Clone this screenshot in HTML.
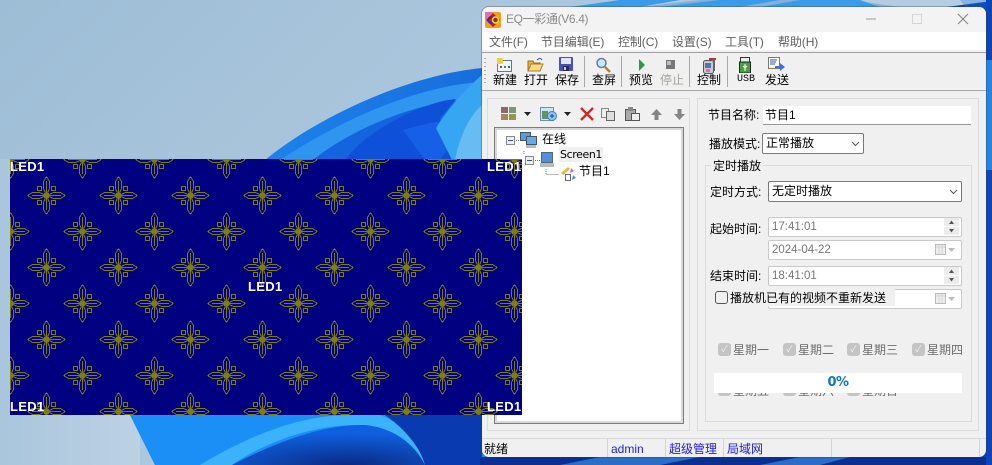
<!DOCTYPE html>
<html><head><meta charset="utf-8">
<style>
html,body{margin:0;padding:0;width:992px;height:465px;overflow:hidden;background:#a9c5dc}
*{box-sizing:border-box}
body{position:relative;font:12px/16px "Liberation Sans","Noto Sans CJK SC",sans-serif;color:#000}
.a{position:absolute;white-space:nowrap}
.m{color:#5f5f5f;top:34px;font-size:12px;letter-spacing:-.1px}
.t{top:72px;font-size:12px;color:#000}
.sep{position:absolute;top:56px;width:1px;height:31px;background:#a8a8a8}
.in{position:absolute;background:#fff;border:1px solid #c9c9c9;border-radius:2px;color:#777;padding-left:3px;line-height:18px;height:20px;font-size:11.5px}
.cb{position:absolute;width:13px;height:13px;background:#c4c4c4;border-radius:3px;color:#f0f0f0;font-size:9px;line-height:13px;text-align:center}
.d{color:#6d6d6d;font-size:12px}
.led{color:#fff;font:bold 13px/16px "Liberation Sans",sans-serif;letter-spacing:.3px}
svg{position:absolute;display:block}
</style></head><body>
<svg style="left:0;top:0" width="992" height="465" viewBox="0 0 992 465">
<defs>
<linearGradient id="sky" x1="0" y1="0" x2="1" y2="0.5"><stop offset="0" stop-color="#9dbdd6"/><stop offset="1" stop-color="#bcd2e5"/></linearGradient>
<linearGradient id="sky2" x1="0" y1="0" x2="1" y2="0"><stop offset="0" stop-color="#a9c6dc"/><stop offset="1" stop-color="#bdd1e4"/></linearGradient>
<linearGradient id="dk" x1="0" y1="0" x2="1" y2="0"><stop offset="0" stop-color="#1f8ff5"/><stop offset="1" stop-color="#0a3cb8"/></linearGradient>
<radialGradient id="dark" cx="0.6" cy="1" r="0.8"><stop offset="0" stop-color="#0a2a80"/><stop offset="1" stop-color="#0f60e0"/></radialGradient>
</defs>
<rect width="992" height="465" fill="url(#sky)"/>
<rect y="159" width="140" height="306" fill="url(#sky2)"/>
<path d="M265 160C320 115 410 75 482 68L1000 0V465H155L130 415 L130 160Z" fill="url(#dk)"/>
<path d="M280 160C340 120 420 85 482 82V160Z" fill="#2f95ee"/>
<path d="M313 160C350 130 410 105 460 100L482 100V160Z" fill="#1464e0"/>
<path d="M346 160C360 135 420 102 456 99L440 118 440 140 482 160Z" fill="#0f50d8"/>
<path d="M403 130C420 125 440 120 470 118L440 160H425Z" fill="#1560e6"/>
<path d="M436 128C450 105 470 85 482 75V160H452Z" fill="#36a6f2"/>
<path d="M455 160C460 135 470 115 482 105V160Z" fill="#67bdf3"/>
<path d="M130 415H522V465H155Z" fill="#1c8ff6"/>
<path d="M200 465C250 435 300 415 350 415H380C405 425 425 445 435 465H422C400 440 380 425 355 425C310 425 260 445 232 465Z" fill="#3cb2fa"/>
<path d="M232 465C270 445 320 424 365 425C395 428 415 445 425 465Z" fill="url(#dark)"/>
<path d="M425 465C420 445 400 425 385 415H482V465Z" fill="#0a3ab0"/>
<rect x="480" y="457" width="512" height="8" fill="#0b2f90"/>
<path d="M560 465L600 457H700L660 465ZM760 465L800 457H850L820 465Z" fill="#2a6ec9"/>
<path d="M482 0H992V40L960 0H850L900 7H640L700 0Z" fill="#1a73dc" opacity=".3"/>
<path d="M570 7L620 0H680L640 7ZM660 7L720 0H780L740 7ZM760 7L800 0H860L880 7Z" fill="#3a9ce8"/>
<path d="M986 0H992V465H986Z" fill="#0d45b8"/>
<path d="M986 60H992V170H986Z" fill="#2384e6"/>
</svg>

<!-- window -->
<div class="a" style="left:481px;top:6px;width:506px;height:452px;border-radius:8px;background:rgba(60,60,60,.35)"></div>
<div class="a" style="left:482px;top:7px;width:504px;height:450px;background:#f0f0f0;border-radius:7px;overflow:hidden">
  <div class="a" style="left:0;top:0;width:504px;height:25px;background:#f3f3f3"></div>
  <div class="a" style="left:0;top:25px;width:504px;height:18px;background:#fff"></div>
  <div class="a" style="left:0;top:45px;width:504px;height:1px;background:#a0a0a0"></div>
  <div class="a" style="left:0;top:83px;width:504px;height:1px;background:#a8a8a8"></div>
</div>
<!-- title -->
<svg style="left:485px;top:12px" width="16" height="16" viewBox="0 0 16 16"><rect width="16" height="16" rx="2" fill="#f0a020"/><path d="M0 0H8L0 8Z" fill="#e070b0"/><path d="M8 1L15 8 8 15 1 8Z" fill="#d01818"/><circle cx="6" cy="8" r="3" fill="none" stroke="#2030d0" stroke-width="1.6"/><circle cx="10.500" cy="8" r="3" fill="none" stroke="#ffe020" stroke-width="1.600"/></svg>
<div class="a" style="left:506px;top:11px;color:#8a8a8a;font-size:12px;letter-spacing:-.35px">EQ一彩通(V6.4)</div>
<svg style="left:866px;top:12px" width="110" height="14" viewBox="0 0 110 14"><path d="M0 7H10" stroke="#9a9a9a"/><rect x="46.500" y="2.500" width="9" height="9" fill="none" stroke="#d4d4d4"/><path d="M92 2L102 12M102 2L92 12" stroke="#888" stroke-width="1.100"/></svg>
<!-- menu -->
<div class="a m" style="left:489px">文件(F)</div>
<div class="a m" style="left:541px">节目编辑(E)</div>
<div class="a m" style="left:618px">控制(C)</div>
<div class="a m" style="left:672px">设置(S)</div>
<div class="a m" style="left:725px">工具(T)</div>
<div class="a m" style="left:778px">帮助(H)</div>
<!-- toolbar -->
<svg style="left:484px;top:56px" width="4" height="32"><path d="M1 2v1M1 6v1M1 10v1M1 14v1M1 18v1M1 22v1M1 26v1" stroke="#aaa" stroke-width="2"/></svg>
<div class="a t" style="left:493px">新建</div>
<div class="a t" style="left:524px">打开</div>
<div class="a t" style="left:555px">保存</div>
<div class="a t" style="left:592px">查屏</div>
<div class="a t" style="left:629px">预览</div>
<div class="a t" style="left:660px;color:#a5a59c">停止</div>
<div class="a t" style="left:697px">控制</div>
<div class="a t" style="left:737px;font-size:10px;font-family:'Liberation Mono',monospace">USB</div>
<div class="a t" style="left:765px">发送</div>
<div class="sep" style="left:584px"></div><div class="sep" style="left:621px"></div><div class="sep" style="left:689px"></div><div class="sep" style="left:727px"></div>
<svg style="left:496px;top:57px" width="16" height="15"><rect x="1.500" y="3.500" width="14" height="11" fill="#f4f8ff" stroke="#5a7aa0"/><rect x="1" y="1" width="6" height="6" fill="#f0d040"/><rect x="4" y="9" width="2" height="2" fill="#d03030"/><rect x="8" y="9" width="2" height="2" fill="#30a030"/><rect x="12" y="9" width="2" height="2" fill="#3060d0"/></svg>
<svg style="left:527px;top:57px" width="17" height="15"><path d="M1 4H6L7 6H13V14H1Z" fill="#e8b040" stroke="#9a7020"/><path d="M1 14L4 7H16L13 14Z" fill="#f8dc80" stroke="#a88030"/><path d="M10 3C12 1 14 1 15 3" fill="none" stroke="#3060a0"/></svg>
<svg style="left:559px;top:57px" width="15" height="15"><rect width="14" height="14" rx="1" fill="#4a50b8"/><rect x="2" y="1" width="10" height="6" fill="#dfe4fa"/><rect x="4" y="9" width="6" height="5" fill="#2a2a50"/><rect x="5" y="10" width="2" height="3" fill="#ccc"/></svg>
<svg style="left:595px;top:57px" width="17" height="16"><circle cx="6.500" cy="6" r="4.500" fill="#cfe6fa" stroke="#5a7fa8" stroke-width="1.500"/><path d="M10 10L15 15" stroke="#b08030" stroke-width="2.400"/></svg>
<svg style="left:638px;top:59px" width="8" height="12"><path d="M1 0L7 6 1 12Z" fill="#2f9a3a"/></svg>
<svg style="left:666px;top:60px" width="10" height="10"><rect width="9" height="9" fill="#777"/><rect x="1" y="1" width="4" height="4" fill="#bbb"/></svg>
<svg style="left:701px;top:57px" width="17" height="17"><rect x="2.500" y="3.500" width="10" height="13" rx="2" fill="#c8c8d4" stroke="#555"/><rect x="4" y="6" width="6" height="5" fill="#5a70b0"/><rect x="5" y="12" width="4" height="3" fill="#e070a0"/><path d="M8 2L15 2" stroke="#c03030" stroke-width="2"/><path d="M13 2V14" stroke="#666" stroke-width="2"/></svg>
<svg style="left:739px;top:57px" width="12" height="16"><rect x="1.500" y="0.500" width="9" height="5" fill="#eee" stroke="#333"/><rect x="0.500" y="5" width="11" height="11" fill="#46a03c" stroke="#223"/><path d="M6 7V14M4 9L6 11 8 9" stroke="#fff" fill="none"/></svg>
<svg style="left:768px;top:56px" width="17" height="16"><rect x="0.500" y="1.500" width="11" height="11" fill="#fff" stroke="#807860"/><path d="M2 4H9M2 6H8M2 8H7" stroke="#3050b0"/><path d="M7 10H12V7L17 11 12 15V12H7Z" fill="#4070d8"/></svg>

<!-- panels -->
<div class="a" style="left:487px;top:98px;width:203px;height:333px;border:1px solid #dcdcdc"></div>
<div class="a" style="left:697px;top:98px;width:282px;height:333px;border:1px solid #dcdcdc"></div>
<svg style="left:500px;top:106px" width="200" height="16" viewBox="0 0 200 16">
<g><rect x="1" y="1" width="7" height="6" fill="#8a6a68"/><rect x="9" y="1" width="7" height="6" fill="#7f9580"/><rect x="1" y="8" width="7" height="6" fill="#a8885a"/><rect x="9" y="8" width="7" height="6" fill="#96964e"/></g>
<path d="M24 6H31L27.500 10Z" fill="#222"/>
<rect x="40.500" y="1.500" width="13" height="13" fill="#d0e4f4" stroke="#6a90c0"/><rect x="42" y="5" width="6" height="8" fill="#6a9060"/><circle cx="52" cy="10" r="4.500" fill="#8cc4ef" stroke="#3a80c8"/><path d="M50 10H54M52 8V12" stroke="#1040a0"/>
<path d="M64 6H71L67.500 10Z" fill="#222"/>
<path d="M81 2L93 14M93 2L81 14" stroke="#d02828" stroke-width="2.400"/>
<rect x="101.500" y="2.500" width="7" height="9" fill="#eee" stroke="#888"/><rect x="106.500" y="5.500" width="8" height="9" fill="#ddd" stroke="#666"/>
<rect x="125.500" y="3.500" width="10" height="11" fill="#aaa" stroke="#555"/><rect x="128" y="1" width="5" height="4" fill="#888"/><rect x="131.500" y="7.500" width="8" height="7" fill="#eee" stroke="#555"/>
<path d="M151 9L156.500 3 162 9H158.500V14H154.500V9Z" fill="#858585"/>
<path d="M174 8L179.500 14 185 8H181.500V3H177.500V8Z" fill="#858585"/>
</svg>
<!-- tree -->
<div class="a" style="left:494px;top:127px;width:190px;height:297px;background:#fff;border:1px solid #7c7c7c;box-shadow:inset 0 0 0 2px #d8d8d8"></div>
<svg style="left:505px;top:131px" width="90" height="52" viewBox="0 0 90 52">
<rect x="1.500" y="5.500" width="8" height="8" fill="#eee" stroke="#888"/><path d="M3 9.500H8" stroke="#3050a0"/>
<path d="M11 9.500H16M19 20V24" stroke="#777" stroke-dasharray="1 1"/>
<rect x="15.500" y="1.500" width="10" height="8" fill="#5a9ae0" stroke="#456"/><rect x="21.500" y="5.500" width="10" height="8" fill="#6aa8e8" stroke="#456"/><rect x="21" y="14" width="10" height="3" fill="#bbb"/>
<rect x="20.500" y="25.500" width="8" height="8" fill="#eee" stroke="#888"/><path d="M22 29.500H27" stroke="#3050a0"/><path d="M30 29.500H35" stroke="#777" stroke-dasharray="1 1"/>
<rect x="36.500" y="21.500" width="11" height="10" fill="#4f8fdc" stroke="#567"/><rect x="35" y="32" width="14" height="4" fill="#b8b8c0"/>
<path d="M41 38V43.500H54" stroke="#777" stroke-dasharray="1 1" fill="none"/>
<path d="M56 42L63 36 65 38 58 44Z" fill="#e8b830"/><path d="M66 37L69 40 65 42Z" fill="#e060c0"/><path d="M68 44L71 47 67 49Z" fill="#4a90e0"/><rect x="60.500" y="43.500" width="5" height="6" fill="none" stroke="#667"/>
</svg>
<div class="a" style="left:542px;top:131px">在线</div>
<div class="a" style="left:559px;top:147px;height:15px;background:#f0f0f0;padding:0 1px;font-size:11px;line-height:15px;font-family:'DejaVu Sans',sans-serif;letter-spacing:-.4px">Screen1</div>
<div class="a" style="left:579px;top:163px">节目1</div>

<!-- right form -->
<div class="a" style="left:708px;top:107px">节目名称:</div>
<div class="a" style="left:763px;top:106px;width:208px;height:19px;background:#fff;border-bottom:1px solid #999;padding-left:2px;line-height:18px">节目1</div>
<div class="a" style="left:709px;top:136px">播放模式:</div>
<div class="a" style="left:762px;top:133px;width:102px;height:21px;background:#fff;border:1px solid #7a7a7a;border-radius:2px;padding-left:3px;line-height:19px">正常播放</div>
<svg style="left:851px;top:141px" width="10" height="6"><path d="M1 1L4.500 4.500 8 1" fill="none" stroke="#555"/></svg>
<div class="a" style="left:705px;top:165px;width:267px;height:257px;border:1px solid #dcdcdc"></div>
<div class="a" style="left:711px;top:158px;background:#f0f0f0;padding:0 2px">定时播放</div>
<div class="a" style="left:710px;top:184px">定时方式:</div>
<div class="a" style="left:768px;top:181px;width:194px;height:21px;background:#fff;border:1px solid #7a7a7a;border-radius:2px;padding-left:3px;line-height:19px">无定时播放</div>
<svg style="left:949px;top:189px" width="10" height="6"><path d="M1 1L4.500 4.500 8 1" fill="none" stroke="#555"/></svg>
<div class="a" style="left:710px;top:221px">起始时间:</div>
<div class="in" style="left:768px;top:217px;width:194px">17:41:01</div>
<div class="in" style="left:768px;top:240px;width:194px">2024-04-22</div>
<div class="a" style="left:710px;top:268px">结束时间:</div>
<div class="in" style="left:768px;top:266px;width:194px">18:41:01</div>
<div class="in" style="left:768px;top:289px;width:194px"></div>
<svg style="left:943px;top:217px" width="18" height="20"><path d="M1 1H16V9H1ZM1 10H16V18H1Z" fill="#ececec"/><path d="M6 7L8.500 3.500 11 7ZM6 12L8.500 15.500 11 12Z" fill="#555"/></svg>
<svg style="left:943px;top:266px" width="18" height="20"><path d="M1 1H16V9H1ZM1 10H16V18H1Z" fill="#ececec"/><path d="M6 7L8.500 3.500 11 7ZM6 12L8.500 15.500 11 12Z" fill="#555"/></svg>
<svg style="left:935px;top:243px" width="26" height="14"><rect x="0.500" y="1.500" width="10" height="10" fill="#eee" stroke="#bbb"/><path d="M1 4H10M4 2V11M7 2V11" stroke="#d4d4d4"/><path d="M13 5H20L16.500 9Z" fill="#bbb"/></svg>
<svg style="left:935px;top:292px" width="26" height="14"><rect x="0.500" y="1.500" width="10" height="10" fill="#eee" stroke="#bbb"/><path d="M1 4H10M4 2V11M7 2V11" stroke="#d4d4d4"/><path d="M13 5H20L16.500 9Z" fill="#bbb"/></svg>
<div class="a" style="left:715px;top:288px;width:180px;height:18px;background:#f0f0f0"></div>
<div class="a" style="left:715px;top:291px;width:13px;height:13px;background:#f0f0f0;border:1px solid #555;border-radius:3px"></div>
<div class="a" style="left:730px;top:290px">播放机已有的视频不重新发送</div>
<div class="cb" style="left:718px;top:343px">✓</div><div class="a d" style="left:733px;top:342px">星期一</div>
<div class="cb" style="left:783px;top:343px">✓</div><div class="a d" style="left:798px;top:342px">星期二</div>
<div class="cb" style="left:847px;top:343px">✓</div><div class="a d" style="left:862px;top:342px">星期三</div>
<div class="cb" style="left:912px;top:343px">✓</div><div class="a d" style="left:927px;top:342px">星期四</div>
<div class="cb" style="left:718px;top:383px">✓</div><div class="a d" style="left:733px;top:383px">星期五</div>
<div class="cb" style="left:783px;top:383px">✓</div><div class="a d" style="left:798px;top:383px">星期六</div>
<div class="cb" style="left:847px;top:383px">✓</div><div class="a d" style="left:862px;top:383px">星期日</div>
<div class="a" style="left:714px;top:373px;width:248px;height:20px;background:#fff;text-align:center;color:#0a74d8;font:bold 13px/20px 'DejaVu Sans',sans-serif;letter-spacing:-.5px">0%</div>
<div class="a" style="left:714px;top:396px;width:250px;height:10px;background:#f0f0f0"></div>
<!-- status -->
<div class="a" style="left:482px;top:438px;width:504px;height:1px;background:#d8d8d8"></div>
<div class="a" style="left:607px;top:439px;width:1px;height:18px;background:#d4d4d4"></div>
<div class="a" style="left:665px;top:439px;width:1px;height:18px;background:#d4d4d4"></div>
<div class="a" style="left:723px;top:439px;width:1px;height:18px;background:#d4d4d4"></div>
<div class="a" style="left:831px;top:439px;width:1px;height:18px;background:#d4d4d4"></div>
<div class="a" style="left:979px;top:439px;width:1px;height:18px;background:#d4d4d4"></div>
<div class="a" style="left:484px;top:441px">就绪</div>
<div class="a" style="left:611px;top:441px;color:#1a1aee">admin</div>
<div class="a" style="left:669px;top:441px;color:#1a1aee">超级管理</div>
<div class="a" style="left:727px;top:441px;color:#1a1aee">局域网</div>

<!-- LED panel -->
<svg style="left:10px;top:159px" width="512" height="256" viewBox="0 0 512 256" shape-rendering="crispEdges">
<defs>
<g id="v"><path d="M.5 -18.500L-2.500 -13.500V-6.500L-.5 -2M.5 -18.500L3.500 -13.500V-6.500L1.500 -2M.5 -14V-2"/></g>
<g id="f" fill="none" stroke="#808000" stroke-width="1">
<use href="#v"/>
<use href="#v" transform="rotate(90 .5 .5)"/>
<use href="#v" transform="rotate(180 .5 .5)"/>
<use href="#v" transform="rotate(270 .5 .5)"/>
<rect x="-8.500" y="-8.500" width="4" height="4"/><rect x="5.500" y="-8.500" width="4" height="4"/><rect x="-8.500" y="5.500" width="4" height="4"/><rect x="5.500" y="5.500" width="4" height="4"/>
<rect x="-2" y="-2" width="5" height="5" fill="#808000" stroke="none"/>
</g>
<g id="ra"><use href="#f" x="0"/><use href="#f" x="72"/><use href="#f" x="144"/><use href="#f" x="216"/><use href="#f" x="288"/><use href="#f" x="360"/><use href="#f" x="432"/><use href="#f" x="504"/></g>
<g id="rb"><use href="#f" x="36"/><use href="#f" x="108"/><use href="#f" x="180"/><use href="#f" x="252"/><use href="#f" x="324"/><use href="#f" x="396"/><use href="#f" x="468"/></g>
</defs>
<rect width="512" height="256" fill="#000080"/>
<use href="#ra" y="0"/><use href="#rb" y="36"/><use href="#ra" y="72"/><use href="#rb" y="108"/><use href="#ra" y="144"/><use href="#rb" y="180"/><use href="#ra" y="216"/><use href="#rb" y="252"/>
</svg>
<div class="a led" style="left:10px;top:159px">LED1</div>
<div class="a led" style="left:487px;top:159px">LED1</div>
<div class="a led" style="left:248px;top:279px">LED1</div>
<div class="a led" style="left:10px;top:399px">LED1</div>
<div class="a led" style="left:487px;top:399px">LED1</div>
</body></html>
